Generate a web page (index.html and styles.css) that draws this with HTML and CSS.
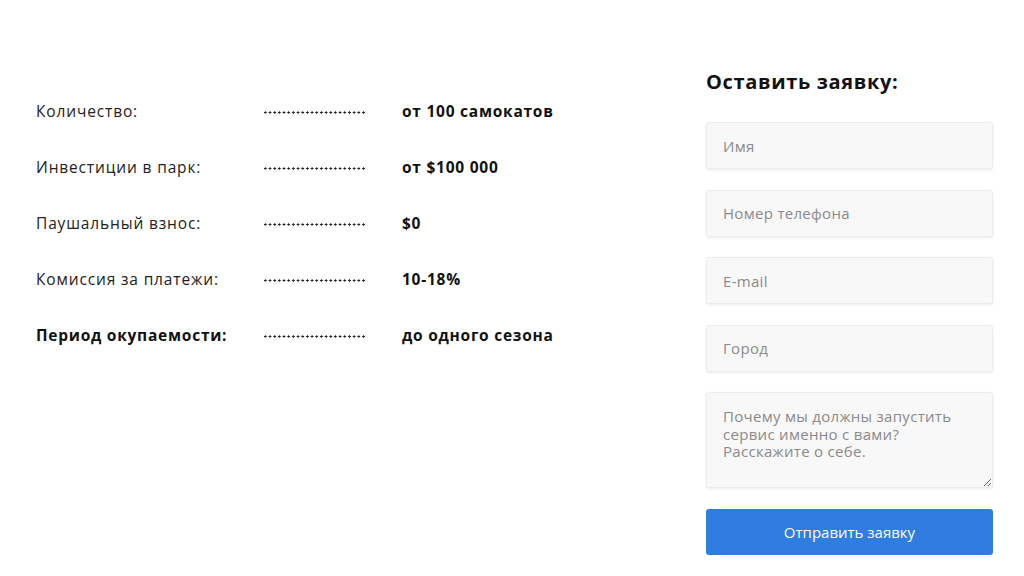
FILE: index.html
```html
<!DOCTYPE html>
<html lang="ru">
<head>
<meta charset="utf-8">
<title>Заявка</title>
<link rel="stylesheet" href="styles.css">
</head>
<body>
<main class="page">
  <section class="terms">
    <div class="row"><span class="label">Количество:</span><span class="dots"></span><span class="value">от 100 самокатов</span></div>
    <div class="row"><span class="label">Инвестиции в парк:</span><span class="dots"></span><span class="value">от $100 000</span></div>
    <div class="row"><span class="label">Паушальный взнос:</span><span class="dots"></span><span class="value">$0</span></div>
    <div class="row"><span class="label">Комиссия за платежи:</span><span class="dots"></span><span class="value">10-18%</span></div>
    <div class="row"><span class="label strong">Период окупаемости:</span><span class="dots"></span><span class="value">до одного сезона</span></div>
  </section>
  <form class="form">
    <h2 class="title">Оставить заявку:</h2>
    <input class="field" type="text" placeholder="Имя">
    <input class="field" type="text" placeholder="Номер телефона">
    <input class="field" type="text" placeholder="E-mail">
    <input class="field" type="text" placeholder="Город">
    <textarea class="field area" placeholder="Почему мы должны запустить сервис именно с вами? Расскажите о себе."></textarea>
    <button class="submit" type="button">Отправить заявку</button>
  </form>
</main>
</body>
</html>
```
FILE: styles.css
```css
* { box-sizing: border-box; }
html, body { margin: 0; padding: 0; background: #fff; }
body {
  font-family: "Open Sans", "Noto Sans", sans-serif;
  color: #1a1a1a;
  width: 1024px;
  height: 576px;
  overflow: hidden;
}
.page {
  display: flex;
  padding: 70px 0 0 36px;
}
.terms {
  width: 670px;
  padding-top: 13px;
  display: flex;
  flex-direction: column;
}
.row {
  height: 56px;
  display: flex;
  align-items: center;
  font-size: 15.5px;
}
.label {
  width: 227px;
  color: #222;
  letter-spacing: 0.85px;
}
.label.strong { font-weight: 700; color: #111; letter-spacing: 0.75px; }
.dots {
  width: 103px;
  height: 3px;
  background-image: radial-gradient(circle, #222 0.95px, transparent 1.25px);
  background-size: 4.68px 3px;
  background-repeat: repeat-x;
  margin-top: 2px;
}
.value {
  margin-left: 36px;
  font-weight: 700;
  color: #111;
  letter-spacing: 0.75px;
}
.form {
  width: 287px;
  display: flex;
  flex-direction: column;
}
.title {
  margin: 0 0 28px;
  font-size: 20px;
  line-height: 24px;
  font-weight: 700;
  color: #111;
  letter-spacing: 0.65px;
}
.field {
  height: 47px;
  margin: 0 0 20.5px;
  padding: 0 16px;
  border: 1px solid #ececec;
  border-radius: 3px;
  background: #f8f8f8;
  box-shadow: 0 1px 3px rgba(0,0,0,0.08);
  font-family: inherit;
  font-size: 15px;
  letter-spacing: 0.3px;
  color: #333;
  outline: none;
}
.field::placeholder { color: #8a8a8a; }
.area {
  height: 96px;
  padding: 15px 16px;
  line-height: 17.5px;
  resize: vertical;
}
.submit {
  height: 46px;
  border: none;
  border-radius: 3px;
  background: #2f7de1;
  color: #fff;
  font-family: inherit;
  font-size: 15px;
}
```
